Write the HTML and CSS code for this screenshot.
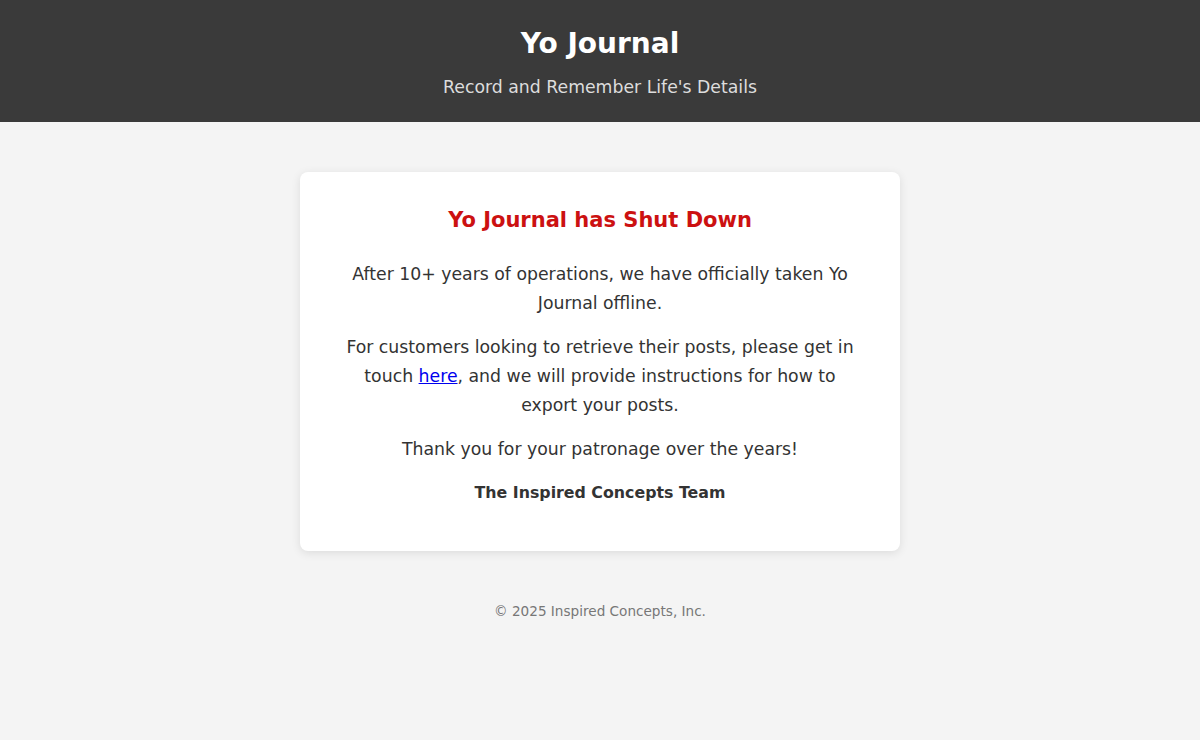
FILE: index.html
```html
<!DOCTYPE html>
<html lang="en">
<head>
<meta charset="utf-8">
<title>Yo Journal</title>
<link rel="stylesheet" href="styles.css">
</head>
<body>
<header class="site-header">
  <h1 class="site-title">Yo Journal</h1>
  <p class="site-tagline">Record and Remember Life's Details</p>
</header>
<main class="content">
  <section class="card">
    <h2 class="card-title">Yo Journal has Shut Down</h2>
    <p>After 10+ years of operations, we have officially taken Yo Journal offline.</p>
    <p>For customers looking to retrieve their posts, please get in touch <a href="#">here</a>, and we will provide instructions for how to export your posts.</p>
    <p class="thanks">Thank you for your patronage over the years!</p>
    <p class="signature">The Inspired Concepts Team</p>
  </section>
</main>
<footer class="site-footer">© 2025 Inspired Concepts, Inc.</footer>
</body>
</html>
```
FILE: styles.css
```css
html, body {
  margin: 0;
  padding: 0;
}
body {
  background: #f4f4f4;
  font-family: "DejaVu Sans", Verdana, sans-serif;
  color: #333;
}
.site-header {
  background: #3a3a3a;
  color: #fff;
  text-align: center;
  height: 122px;
  box-sizing: border-box;
  padding-top: 24px;
}
.site-title {
  margin: 0;
  font-size: 28px;
  font-weight: bold;
  line-height: 40px;
}
.site-tagline {
  margin: 10px 0 0;
  font-size: 17.3px;
  line-height: 26px;
  color: #ddd;
}
.content {
  display: flex;
  justify-content: center;
  padding-top: 50px;
}
.card {
  width: 600px;
  box-sizing: border-box;
  background: #fff;
  border-radius: 8px;
  box-shadow: 0 2px 10px rgba(0,0,0,0.1);
  padding: 31px 40px 44px;
  text-align: center;
}
.card-title {
  margin: 0 0 23px;
  color: #cc1111;
  font-size: 21px;
  line-height: 34px;
}
.card p {
  margin: 0 0 15px;
  font-size: 17.3px;
  line-height: 29px;
}
.card p.thanks {
  margin-bottom: 14px;
}
.card p.signature {
  font-weight: bold;
  font-size: 15.8px;
  margin: 0;
}
.card a {
  color: #0000ee;
}
.site-footer {
  text-align: center;
  margin-top: 52px;
  font-size: 13.6px;
  color: #777;
}
```
